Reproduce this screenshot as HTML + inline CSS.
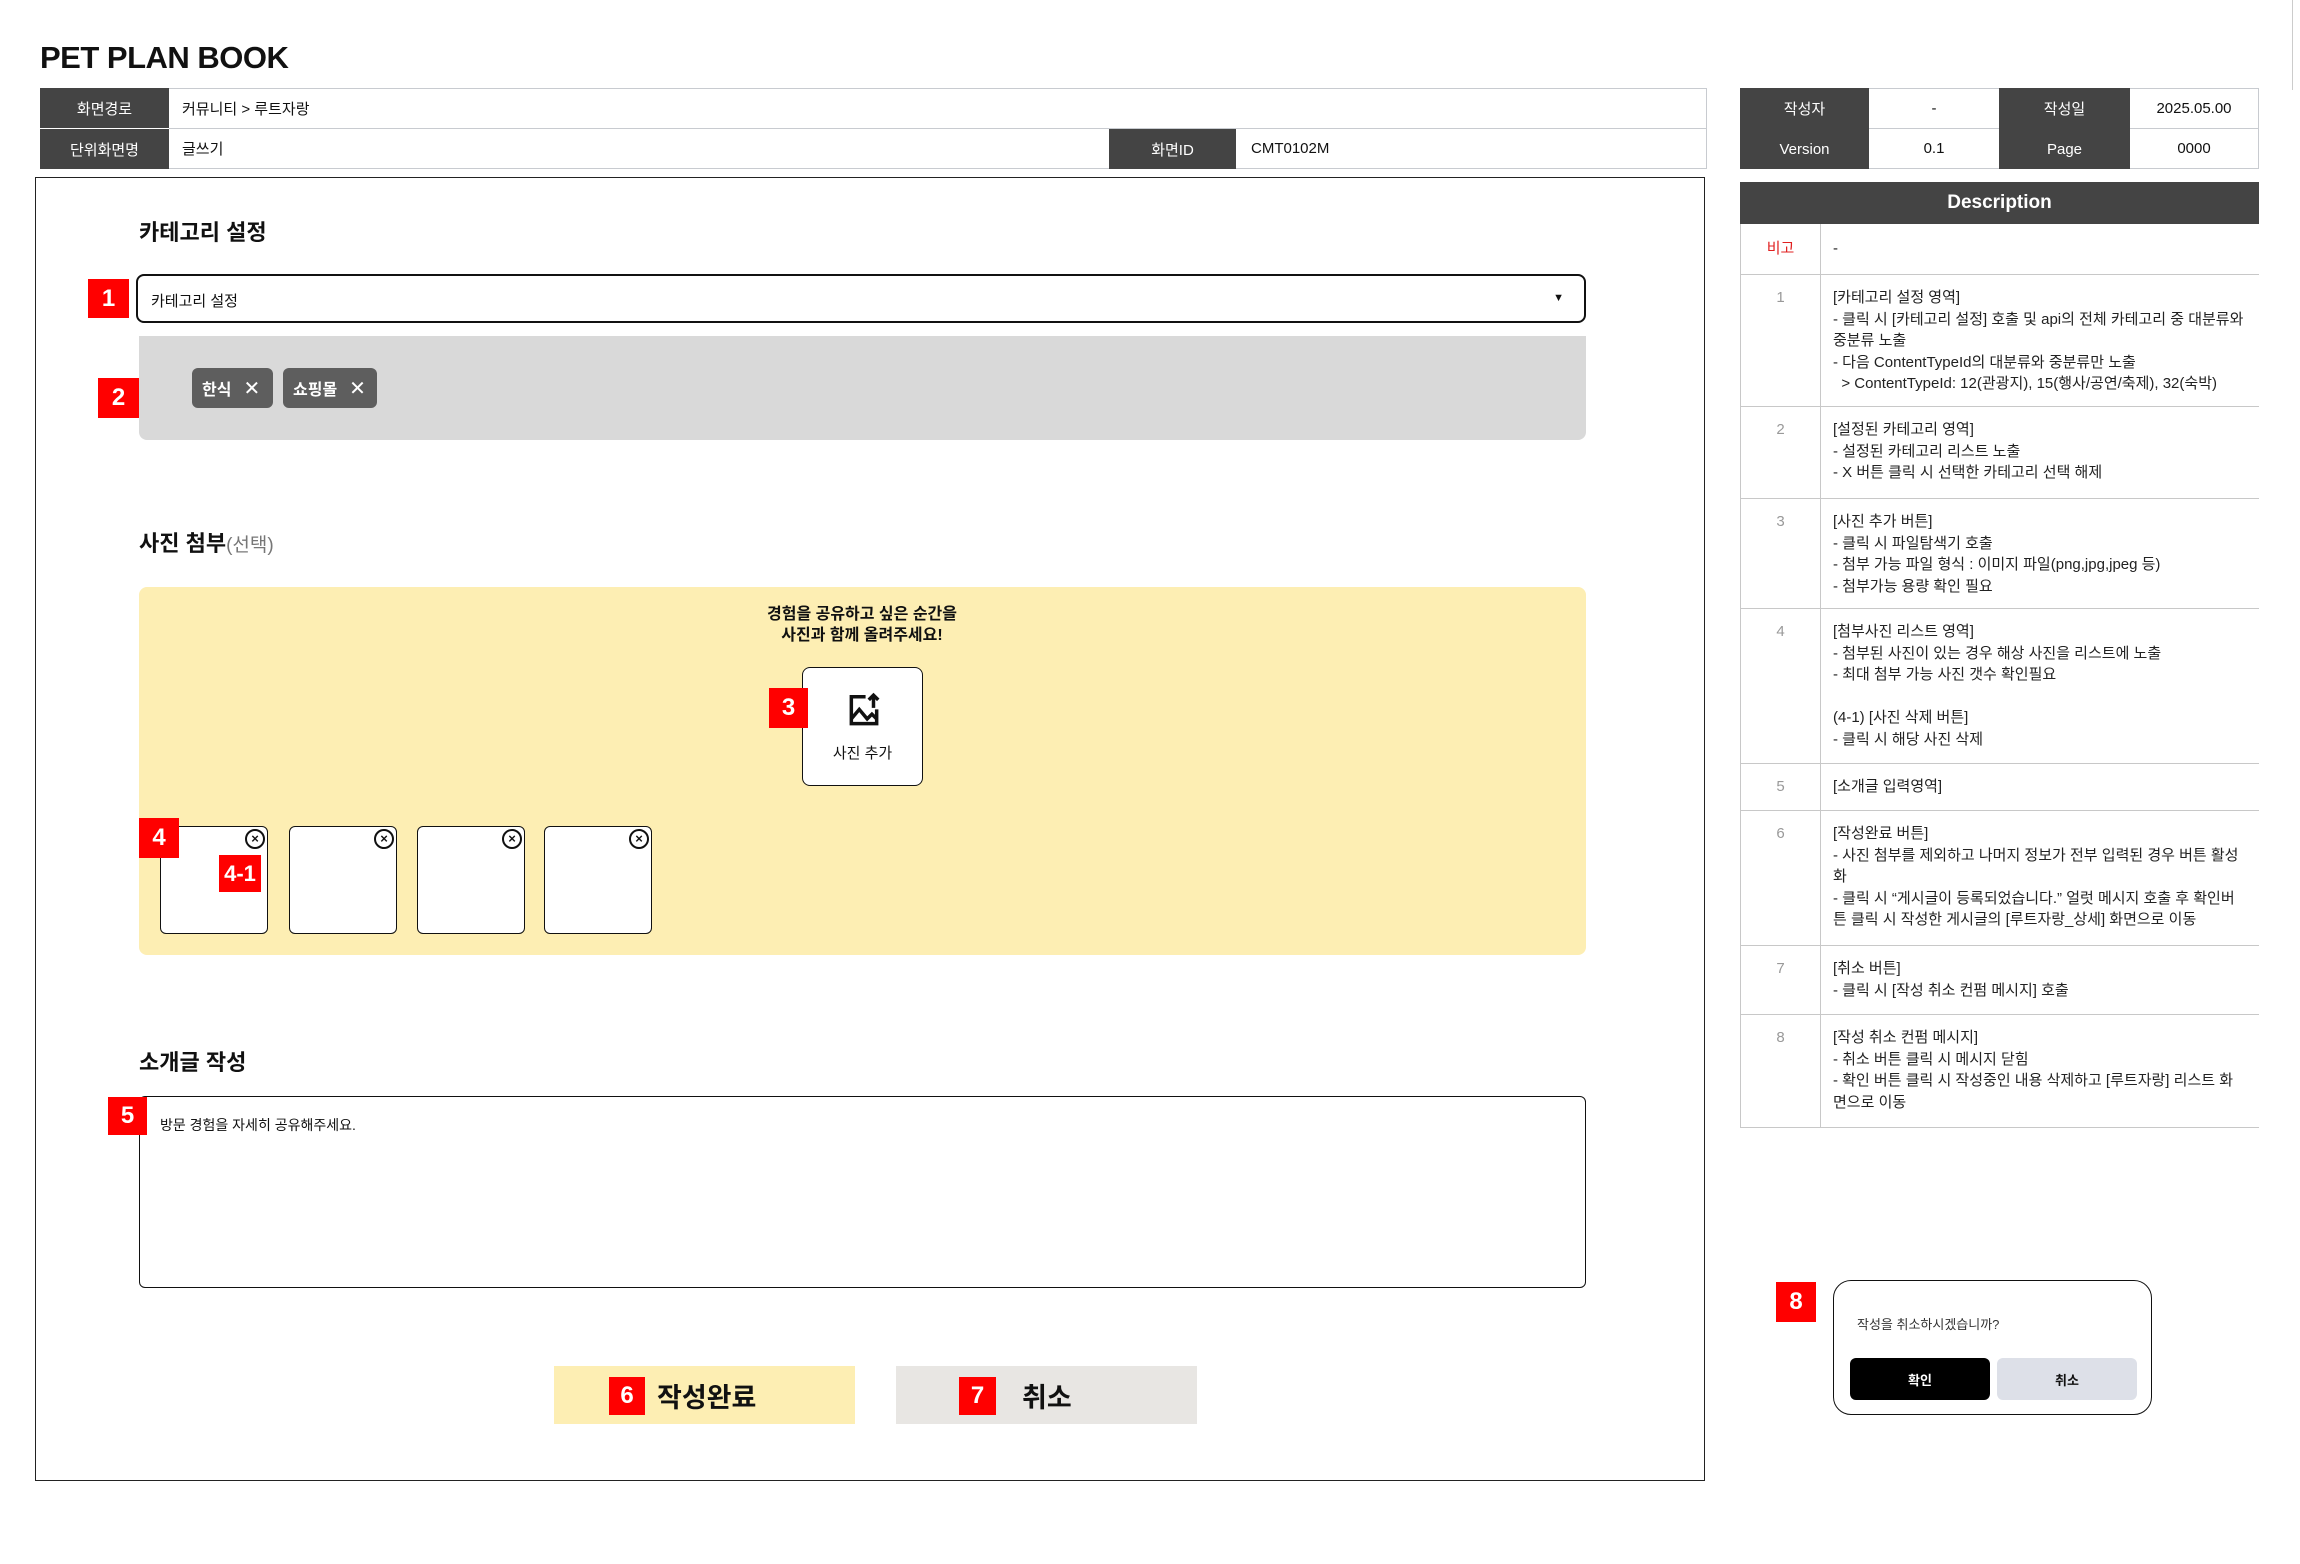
<!DOCTYPE html>
<html><head><meta charset="utf-8"><style>
*{margin:0;padding:0;box-sizing:border-box}
body{width:2300px;height:1564px;background:#fff;position:relative;overflow:hidden;font-family:"Liberation Sans","Noto Sans CJK KR",sans-serif;color:#111}
.a{position:absolute}
.lab{background:#444;color:#fff;font-size:15px;display:flex;align-items:center;justify-content:center}
.val{font-size:15px;display:flex;align-items:center;border-top:1px solid #c8cbd0;border-bottom:1px solid #c8cbd0}
.badge{position:absolute;background:#f00;color:#fff;font-weight:bold;font-size:24px;display:flex;align-items:center;justify-content:center}
.h2{position:absolute;font-size:22px;font-weight:bold}
.row{position:absolute;left:1740px;width:519px;border-bottom:1px solid #c8c8c8;border-left:1px solid #c8c8c8;font-size:15px;line-height:21.5px}
.row .n{position:absolute;left:0;top:0;bottom:0;width:80px;border-right:1px solid #c8c8c8;color:#999;text-align:center;padding-top:12px}
.row .t{position:absolute;left:92px;top:12px;right:14px;color:#222}
.thumb{position:absolute;top:826px;width:108px;height:108px;background:#fff;border:1.5px solid #111;border-radius:6px}
.thumb .x{position:absolute;right:2px;top:2px;width:20px;height:20px;border:2px solid #111;border-radius:50%;font-size:13px;font-weight:bold;text-align:center;line-height:16px}
.chip{position:absolute;top:368px;height:40px;background:#5e5e5e;color:#fff;border-radius:6px;font-size:16px;font-weight:bold;display:flex;align-items:center;padding-left:10px;gap:12px}
</style></head><body>
<div class="a" style="left:2292px;top:0;width:1px;height:90px;background:#ccc"></div>
<div class="a" style="left:40px;top:40px;font-size:31px;font-weight:bold;letter-spacing:-0.5px">PET PLAN BOOK</div>

<div class="a lab" style="left:40px;top:88px;width:129px;height:40px">화면경로</div>
<div class="a val" style="left:169px;top:88px;width:1538px;height:41px;padding-left:13px;border-right:1px solid #c8cbd0">커뮤니티 &gt; 루트자랑</div>
<div class="a lab" style="left:40px;top:129px;width:129px;height:40px">단위화면명</div>
<div class="a val" style="left:169px;top:128px;width:940px;height:41px;padding-left:13px">글쓰기</div>
<div class="a lab" style="left:1109px;top:129px;width:127px;height:40px">화면ID</div>
<div class="a val" style="left:1236px;top:128px;width:471px;height:41px;padding-left:15px;border-right:1px solid #c8cbd0">CMT0102M</div>

<div class="a lab" style="left:1740px;top:88px;width:129px;height:41px">작성자</div>
<div class="a val" style="left:1869px;top:88px;width:130px;height:41px;justify-content:center">-</div>
<div class="a lab" style="left:1999px;top:88px;width:131px;height:41px">작성일</div>
<div class="a val" style="left:2130px;top:88px;width:129px;height:41px;justify-content:center;border-right:1px solid #c8cbd0">2025.05.00</div>
<div class="a lab" style="left:1740px;top:129px;width:129px;height:40px">Version</div>
<div class="a val" style="left:1869px;top:128px;width:130px;height:41px;justify-content:center">0.1</div>
<div class="a lab" style="left:1999px;top:129px;width:131px;height:40px">Page</div>
<div class="a val" style="left:2130px;top:128px;width:129px;height:41px;justify-content:center;border-right:1px solid #c8cbd0">0000</div>

<div class="a lab" style="left:1740px;top:182px;width:519px;height:42px;font-size:19px;font-weight:bold">Description</div>
<div class="row" style="top:224px;height:51px"><div class="n" style="color:#e02020;padding-top:14px">비고</div><div class="t" style="top:14px">-</div></div>
<div class="row" style="top:275px;height:132px"><div class="n">1</div><div class="t">[카테고리 설정 영역]<br>- 클릭 시 [카테고리 설정] 호출 및 api의 전체 카테고리 중 대분류와 중분류 노출<br>- 다음 ContentTypeId의 대분류와 중분류만 노출<br>&nbsp;&nbsp;&gt; ContentTypeId: 12(관광지), 15(행사/공연/축제), 32(숙박)</div></div>
<div class="row" style="top:407px;height:92px"><div class="n">2</div><div class="t">[설정된 카테고리 영역]<br>- 설정된 카테고리 리스트 노출<br>- X 버튼 클릭 시 선택한 카테고리 선택 해제</div></div>
<div class="row" style="top:499px;height:110px"><div class="n">3</div><div class="t">[사진 추가 버튼]<br>- 클릭 시 파일탐색기 호출<br>- 첨부 가능 파일 형식 : 이미지 파일(png,jpg,jpeg 등)<br>- 첨부가능 용량 확인 필요</div></div>
<div class="row" style="top:609px;height:155px"><div class="n">4</div><div class="t">[첨부사진 리스트 영역]<br>- 첨부된 사진이 있는 경우 해상 사진을 리스트에 노출<br>- 최대 첨부 가능 사진 갯수 확인필요<br><br>(4-1) [사진 삭제 버튼]<br>- 클릭 시 해당 사진 삭제</div></div>
<div class="row" style="top:764px;height:47px"><div class="n">5</div><div class="t">[소개글 입력영역]</div></div>
<div class="row" style="top:811px;height:135px"><div class="n">6</div><div class="t">[작성완료 버튼]<br>- 사진 첨부를 제외하고 나머지 정보가 전부 입력된 경우 버튼 활성<br>화<br>- 클릭 시 “게시글이 등록되었습니다.” 얼럿 메시지 호출 후 확인버<br>튼 클릭 시 작성한 게시글의 [루트자랑_상세] 화면으로 이동</div></div>
<div class="row" style="top:946px;height:69px"><div class="n">7</div><div class="t">[취소 버튼]<br>- 클릭 시 [작성 취소 컨펌 메시지] 호출</div></div>
<div class="row" style="top:1015px;height:113px"><div class="n">8</div><div class="t">[작성 취소 컨펌 메시지]<br>- 취소 버튼 클릭 시 메시지 닫힘<br>- 확인 버튼 클릭 시 작성중인 내용 삭제하고 [루트자랑] 리스트 화<br>면으로 이동</div></div>

<div class="a" style="left:35px;top:177px;width:1670px;height:1304px;border:1.5px solid #222"></div>

<div class="h2" style="left:139px;top:215px">카테고리 설정</div>
<div class="a" style="left:136px;top:274px;width:1450px;height:49px;border:2px solid #111;border-radius:8px;font-size:15px;padding:14px 0 0 13px">카테고리 설정<span style="position:absolute;right:20px;top:16px;font-size:11px">▼</span></div>
<div class="badge" style="left:88px;top:279px;width:41px;height:39px">1</div>
<div class="a" style="left:139px;top:336px;width:1447px;height:104px;background:#d9d9d9;border-radius:0 0 8px 8px"></div>
<div class="badge" style="left:98px;top:378px;width:41px;height:40px">2</div>
<div class="chip" style="left:192px;width:81px">한식 <span style="font-weight:normal;font-size:20px">✕</span></div>
<div class="chip" style="left:283px;width:94px">쇼핑몰 <span style="font-weight:normal;font-size:20px">✕</span></div>

<div class="h2" style="left:139px;top:526px">사진 첨부<span style="font-weight:normal;color:#777;font-size:19px">(선택)</span></div>
<div class="a" style="left:139px;top:587px;width:1447px;height:368px;background:#fdeeb3;border-radius:8px"></div>
<div class="a" style="left:662px;top:604px;width:400px;text-align:center;font-size:16px;font-weight:bold;line-height:21px">경험을 공유하고 싶은 순간을<br>사진과 함께 올려주세요!</div>
<div class="a" style="left:802px;top:667px;width:121px;height:119px;background:#fff;border:1.5px solid #111;border-radius:8px">
<svg class="a" style="left:42px;top:24px" width="38" height="38" viewBox="0 0 24 24" fill="none" stroke="#111" stroke-width="2.2"><path d="M13 3H4v17h16v-9"/><path d="M4 17l5-6 5 6 3-3 3 3"/><path d="M18 10V2M15 5l3-3 3 3"/></svg>
<div class="a" style="left:0;width:100%;top:74px;text-align:center;font-size:15px">사진 추가</div></div>
<div class="badge" style="left:769px;top:688px;width:39px;height:40px">3</div>
<div class="thumb" style="left:160px"><div class="x">×</div></div>
<div class="thumb" style="left:289px"><div class="x">×</div></div>
<div class="thumb" style="left:417px"><div class="x">×</div></div>
<div class="thumb" style="left:544px"><div class="x">×</div></div>
<div class="badge" style="left:139px;top:818px;width:40px;height:40px">4</div>
<div class="badge" style="left:219px;top:855px;width:42px;height:37px;font-size:22px">4-1</div>

<div class="h2" style="left:139px;top:1045px">소개글 작성</div>
<div class="a" style="left:139px;top:1096px;width:1447px;height:192px;border:1.5px solid #111;border-radius:6px;font-size:14px;padding:18px 0 0 20px">방문 경험을 자세히 공유해주세요.</div>
<div class="badge" style="left:108px;top:1097px;width:39px;height:38px">5</div>

<div class="a" style="left:554px;top:1366px;width:301px;height:58px;background:#fdeeb3"></div>
<div class="badge" style="left:609px;top:1377px;width:36px;height:38px">6</div>
<div class="a" style="left:657px;top:1376px;font-size:27px;font-weight:bold">작성완료</div>
<div class="a" style="left:896px;top:1366px;width:301px;height:58px;background:#e8e6e3"></div>
<div class="badge" style="left:959px;top:1377px;width:37px;height:38px">7</div>
<div class="a" style="left:1022px;top:1376px;font-size:27px;font-weight:bold">취소</div>

<div class="badge" style="left:1776px;top:1282px;width:40px;height:40px">8</div>
<div class="a" style="left:1833px;top:1280px;width:319px;height:135px;border:1.5px solid #111;border-radius:18px">
<div class="a" style="left:23px;top:33px;font-size:13px;color:#333">작성을 취소하시겠습니까?</div>
<div class="a" style="left:16px;top:77px;width:140px;height:42px;background:#000;color:#fff;border-radius:6px;font-size:13px;font-weight:bold;display:flex;align-items:center;justify-content:center">확인</div>
<div class="a" style="left:163px;top:77px;width:140px;height:42px;background:#dde0e8;border-radius:6px;font-size:13px;font-weight:bold;display:flex;align-items:center;justify-content:center">취소</div>
</div>
</body></html>
